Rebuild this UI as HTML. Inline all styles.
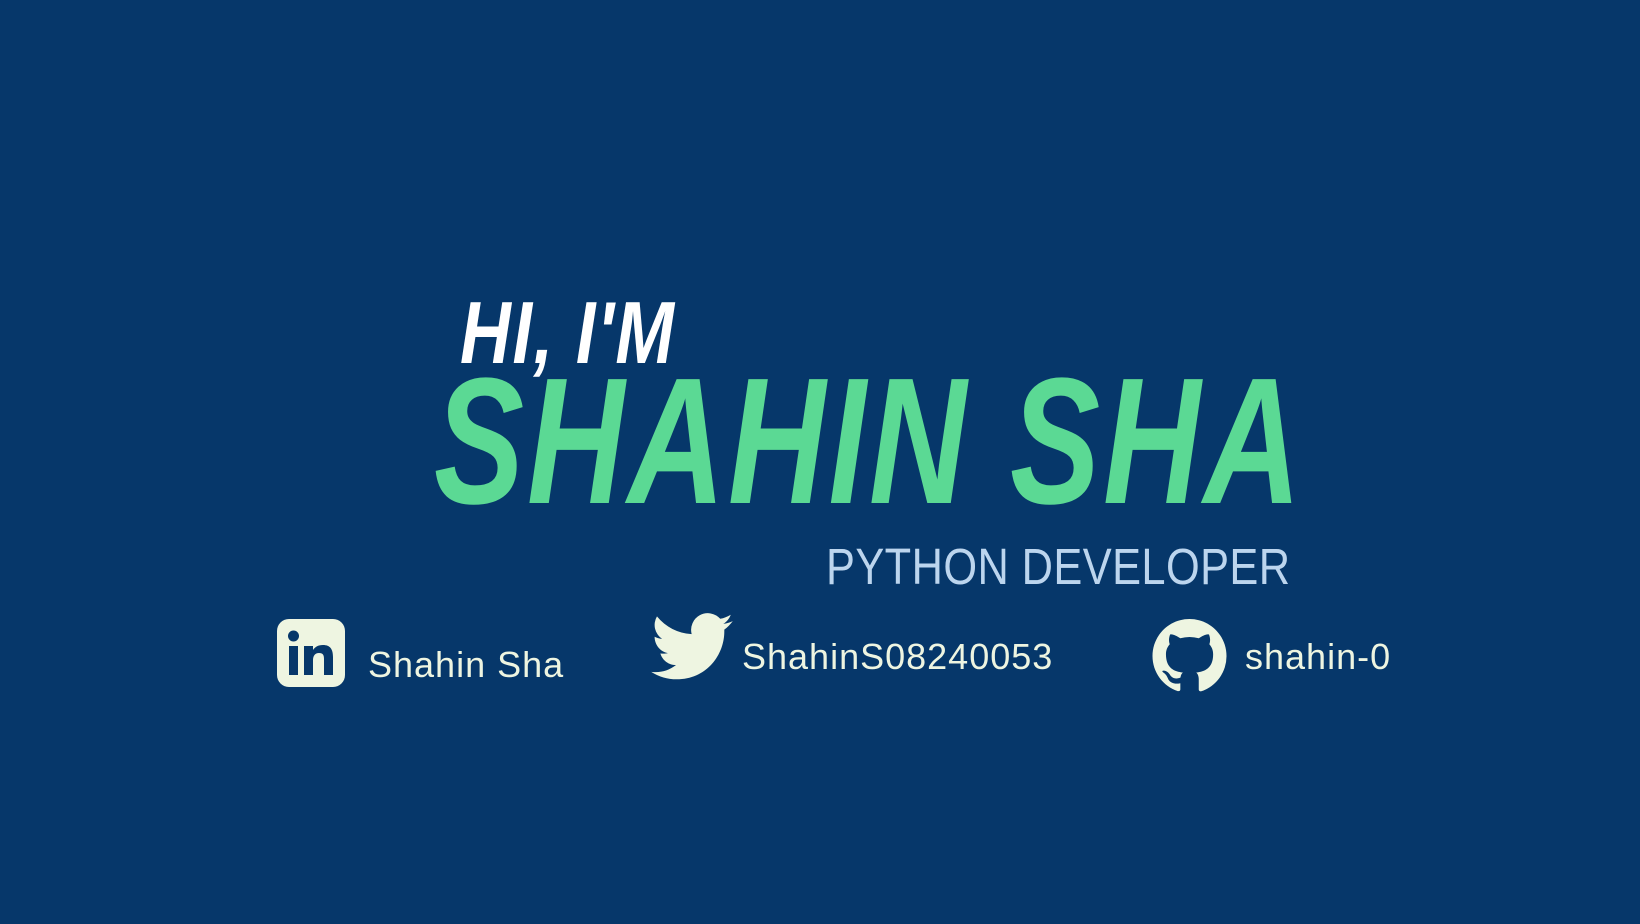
<!DOCTYPE html>
<html><head><meta charset="utf-8"><style>
html,body{margin:0;padding:0;width:1640px;height:924px;background:#06376a;overflow:hidden;font-family:"Liberation Sans",sans-serif}
.a{position:absolute;white-space:nowrap}
.hi{left:460px;top:282px;font-size:88px;font-weight:bold;font-style:italic;color:#fff;transform:scaleX(0.8);transform-origin:left top;letter-spacing:2px}
.name{left:434px;top:338px;font-size:180px;font-weight:bold;font-style:italic;color:#5bd994;transform:scaleX(0.75);transform-origin:left top;letter-spacing:4px}
.dev{left:826px;top:537px;font-size:51px;color:#bcd5ee;letter-spacing:0.5px;transform:scaleX(0.85);transform-origin:left top}
.t{font-size:36px;color:#eef5e1;letter-spacing:1px}
</style></head><body>
<div class="a hi">HI, I'M</div>
<div class="a name">SHAHIN SHA</div>
<div class="a dev">PYTHON DEVELOPER</div>
<svg class="a" style="left:277px;top:619px" width="68" height="68" viewBox="0 0 68 68"><rect width="68" height="68" rx="12" fill="#eef5e1"/><rect x="12" y="27" width="9" height="29" fill="#06376a"/><circle cx="16.5" cy="17" r="5.5" fill="#06376a"/><path d="M27 27h9v4c2-3 5-5 10-5 7 0 10 4 10 12v18h-9V40c0-4-1-6-5-6s-6 3-6 7v15h-9z" fill="#06376a"/></svg>
<div class="a t" style="left:368px;top:644px">Shahin Sha</div>
<svg class="a" style="left:651px;top:613px" width="82" height="68" viewBox="0 0 24 20"><path fill="#eef5e1" d="M24 2.4c-.9.4-1.8.7-2.8.8 1-.6 1.8-1.6 2.2-2.7-1 .6-2 1-3.1 1.2A4.9 4.9 0 0 0 11.9 6.2 14 14 0 0 1 1.7 1 4.9 4.9 0 0 0 3.2 7.6c-.8 0-1.6-.3-2.2-.6 0 2.4 1.7 4.4 3.900 4.800-.7.2-1.500.2-2.200.1.6 2 2.400 3.400 4.600 3.400A9.9 9.9 0 0 1 0 17.3 14 14 0 0 0 7.5 19.5c9.1 0 14-7.5 14-14v-.6c1-.7 1.8-1.6 2.5-2.5z"/></svg>
<div class="a t" style="left:742px;top:636px">ShahinS08240053</div>
<svg class="a" style="left:1152px;top:619px" width="75" height="74" viewBox="0 0 16 16"><path fill="#eef5e1" d="M8 0C3.58 0 0 3.58 0 8c0 3.54 2.29 6.53 5.47 7.590.4.07.55-.17.55-.38v-1.33c-2.23.48-2.7-1.07-2.7-1.07-.36-.92-.89-1.17-.89-1.17-.73-.5.06-.49.06-.49.8.06 1.230.83 1.230.83.71 1.22 1.87.87 2.330.66.07-.52.28-.87.51-1.07-1.78-.2-3.65-.89-3.65-3.95 0-.87.31-1.590.82-2.150-.08-.2-.36-1.020.08-2.120 0 0 .67-.21 2.2.82a7.6 7.6 0 0 1 4 0c1.53-1.04 2.2-.82 2.2-.82.44 1.1.16 1.92.08 2.12.51.56.82 1.27.82 2.15 0 3.07-1.87 3.75-3.65 3.95.29.25.54.73.54 1.48v2.2c0 .21.15.46.55.38A8 8 0 0 0 16 8c0-4.42-3.58-8-8-8z"/></svg>
<div class="a t" style="left:1245px;top:636px">shahin-0</div>
</body></html>
